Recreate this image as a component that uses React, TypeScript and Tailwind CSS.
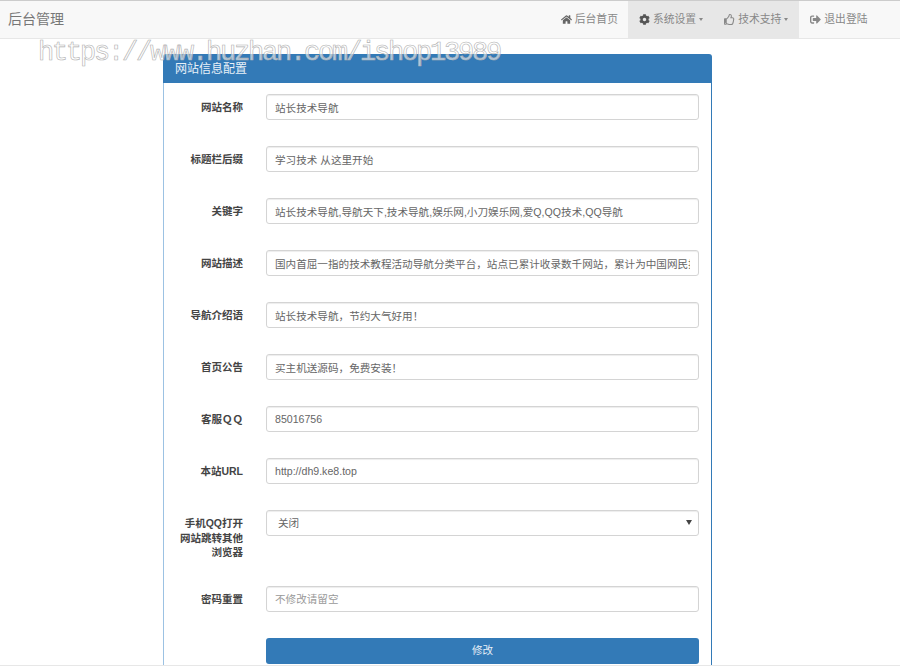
import { FaCog, FaHome, FaRegThumbsUp, FaSignOutAlt } from "react-icons/fa";

const cjk = "font-['Liberation_Sans','Noto_Sans_CJK_SC',sans-serif]";

const rows = [
  { label: "网站名称", value: "站长技术导航" },
  { label: "标题栏后缀", value: "学习技术 从这里开始" },
  { label: "关键字", value: "站长技术导航,导航天下,技术导航,娱乐网,小刀娱乐网,爱Q,QQ技术,QQ导航" },
  { label: "网站描述", value: "国内首屈一指的技术教程活动导航分类平台，站点已累计收录数千网站，累计为中国网民提供优质服务" },
  { label: "导航介绍语", value: "站长技术导航，节约大气好用！" },
  { label: "首页公告", value: "买主机送源码，免费安装！" },
  { label: "客服ＱＱ", value: "85016756" },
  { label: "本站URL", value: "http://dh9.ke8.top" },
];

const Label = ({ children }: { children: React.ReactNode }) => (
  <label className="w-[79px] shrink-0 pt-[6px] text-right text-[10.5px] leading-[14.5px] font-bold text-[#444]">
    {children}
  </label>
);

const Field = ({ value, placeholder }: { value?: string; placeholder?: string }) => (
  <input
    readOnly
    value={value}
    placeholder={placeholder}
    className="block h-[26px] w-[433px] rounded-[3px] border border-[#d4d4d4] bg-white px-[8px] text-[10.6px] text-[#666] shadow-[inset_0_1px_1px_rgba(0,0,0,0.075)] outline-none placeholder:text-[#999]"
  />
);

const NavItem = ({
  icon,
  text,
  caret,
  active,
}: {
  icon: React.ReactNode;
  text: string;
  caret?: boolean;
  active?: boolean;
}) => (
  <a
    className={`flex h-full items-center gap-[3px] px-[10.5px] text-[10.8px] text-[#888] ${
      active ? "bg-[#e7e7e7] text-[#666]" : ""
    }`}
  >
    {icon}
    <span>{text}</span>
    {caret && <span className="h-0 w-0 border-x-[2.5px] border-t-[3px] border-x-transparent border-t-current" />}
  </a>
);

export default function App() {
  return (
    <div className={`relative h-[666px] overflow-hidden border-b border-[#e7e7e7] bg-white ${cjk}`}>
      <nav className="flex h-[39px] items-stretch justify-between border-t border-b border-t-[#ccc] border-b-[#e7e7e7] bg-[#f8f8f8]">
        <a className="flex items-center pl-[8px] text-[14px] text-[#777]">后台管理</a>
        <div className="flex pr-[22px]">
          <NavItem icon={<FaHome className="w-[11px] text-[11px] text-[#666]" />} text="后台首页" />
          <NavItem icon={<FaCog className="w-[11px] text-[11px] text-[#555]" />} text="系统设置" caret active />
          <NavItem icon={<FaRegThumbsUp className="w-[11px] text-[11px]" />} text="技术支持" caret active />
          <NavItem icon={<FaSignOutAlt className="ml-[1px] w-[11px] text-[11px]" />} text="退出登陆" />
        </div>
      </nav>

      <div className="mt-[15px] ml-[163px] w-[549px]">
        <div className="flex h-[29px] items-center rounded-t-[3px] bg-[#337ab7] px-[12px] text-[12px] text-[#e8f0f7]">
          网站信息配置
        </div>
        <div className="flex h-[600px] flex-col gap-[26px] border-x border-r-[#337ab7] border-l-[#9cc2e3] pt-[11px]">
          {rows.map((row) => (
            <div key={row.label} className="flex gap-[23px]">
              <Label>{row.label}</Label>
              <Field value={row.value} />
            </div>
          ))}
          <div className="flex h-[50px] gap-[23px]">
            <Label>
              手机QQ打开
              <br />
              网站跳转其他
              <br />
              浏览器
            </Label>
            <div className="relative h-[26px] w-[433px] rounded-[3px] border border-[#d4d4d4] bg-white pl-[11px] text-[10.6px] leading-[24px] text-[#666] shadow-[inset_0_1px_1px_rgba(0,0,0,0.075)]">
              关闭
              <span className="absolute top-[9px] right-[6px] h-0 w-0 border-x-[3px] border-t-[5px] border-x-transparent border-t-[#444]" />
            </div>
          </div>
          <div className="flex gap-[23px]">
            <Label>密码重置</Label>
            <Field placeholder="不修改请留空" />
          </div>
          <div className="flex gap-[23px]">
            <div className="w-[79px] shrink-0" />
            <button className="h-[26px] w-[433px] rounded-[3px] bg-[#337ab7] text-[10.6px] text-[#e8f0f7]">修改</button>
          </div>
        </div>
      </div>

      {/* watermark */}
      <div className="pointer-events-none absolute top-[37px] left-[38px] font-['Liberation_Mono',monospace] text-[27px] leading-[32px] tracking-[-2.2px] whitespace-nowrap text-white/60 [-webkit-text-stroke:0.6px_#b0b0b0]">
        https://www.huzhan.com/ishop13989
      </div>
    </div>
  );
}
